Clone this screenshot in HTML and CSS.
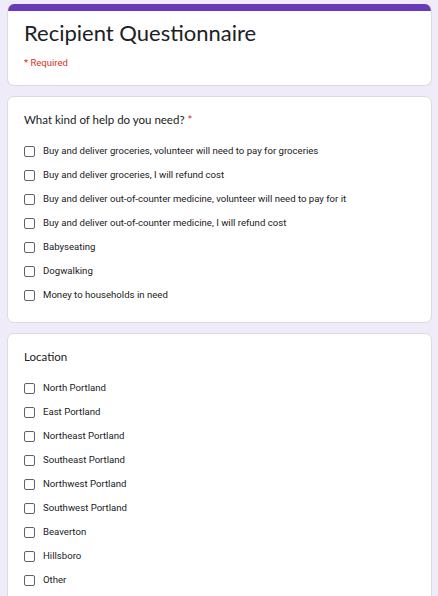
FILE: index.html
```html
<!DOCTYPE html>
<html>
<head>
<meta charset="utf-8">
<link rel="stylesheet" href="styles.css">
</head>
<body>
<div class="page">
  <div class="card header">
    <div class="bar"></div>
    <div class="header-body">
      <h1 class="title">Recipient Questionnaire</h1>
      <div class="required">* Required</div>
    </div>
  </div>

  <div class="card question">
    <div class="q-title">What kind of help do you need? <span class="star">*</span></div>
    <div class="options">
      <label class="opt"><span class="box"></span><span class="text">Buy and deliver groceries, volunteer will need to pay for groceries</span></label>
      <label class="opt"><span class="box"></span><span class="text">Buy and deliver groceries, I will refund cost</span></label>
      <label class="opt"><span class="box"></span><span class="text">Buy and deliver out-of-counter medicine, volunteer will need to pay for it</span></label>
      <label class="opt"><span class="box"></span><span class="text">Buy and deliver out-of-counter medicine, I will refund cost</span></label>
      <label class="opt"><span class="box"></span><span class="text">Babyseating</span></label>
      <label class="opt"><span class="box"></span><span class="text">Dogwalking</span></label>
      <label class="opt"><span class="box"></span><span class="text">Money to households in need</span></label>
    </div>
  </div>

  <div class="card question">
    <div class="q-title">Location</div>
    <div class="options">
      <label class="opt"><span class="box"></span><span class="text">North Portland</span></label>
      <label class="opt"><span class="box"></span><span class="text">East Portland</span></label>
      <label class="opt"><span class="box"></span><span class="text">Northeast Portland</span></label>
      <label class="opt"><span class="box"></span><span class="text">Southeast Portland</span></label>
      <label class="opt"><span class="box"></span><span class="text">Northwest Portland</span></label>
      <label class="opt"><span class="box"></span><span class="text">Southwest Portland</span></label>
      <label class="opt"><span class="box"></span><span class="text">Beaverton</span></label>
      <label class="opt"><span class="box"></span><span class="text">Hillsboro</span></label>
      <label class="opt"><span class="box"></span><span class="text">Other</span></label>
    </div>
  </div>
</div>
</body>
</html>
```

FILE: styles.css
```css
html, body {
  margin: 0;
  padding: 0;
  background: #f0ebf8;
}
body {
  font-family: Roboto, "Liberation Sans", Arial, sans-serif;
  color: #202124;
}
.page {
  padding: 4px 6px 0 7px;
  display: flex;
  flex-direction: column;
  gap: 10px;
}
.card {
  background: #ffffff;
  border: 1px solid #dadce0;
  border-radius: 7px;
  box-sizing: border-box;
}
.header {
  overflow: hidden;
  border-top: none;
}
.bar {
  height: 7px;
  background: #673ab7;
}
.header-body {
  padding: 7px 16px 16px 16px;
}
.title {
  margin: 0;
  font-family: Lato, "Open Sans", sans-serif;
  font-weight: 400;
  font-size: 22px;
  line-height: 30px;
  color: #202124;
}
.required {
  margin-top: 9px;
  font-size: 9.5px;
  line-height: 12px;
  color: #d93025;
}
.question {
  padding: 16px 16px 20px 16px;
}
.q-title {
  font-family: Lato, "Open Sans", sans-serif;
  font-size: 11.5px;
  line-height: 14px;
  color: #202124;
  margin-bottom: 17px;
}
.star {
  color: #d93025;
}
.options {
  display: flex;
  flex-direction: column;
  gap: 10px;
}
.opt {
  display: flex;
  align-items: center;
  gap: 8px;
  height: 14px;
}
.box {
  width: 9px;
  height: 9px;
  border: 1.5px solid #5f6368;
  border-radius: 2px;
  flex: none;
}
.text {
  font-size: 9.6px;
  line-height: 14px;
  color: #202124;
}
```
